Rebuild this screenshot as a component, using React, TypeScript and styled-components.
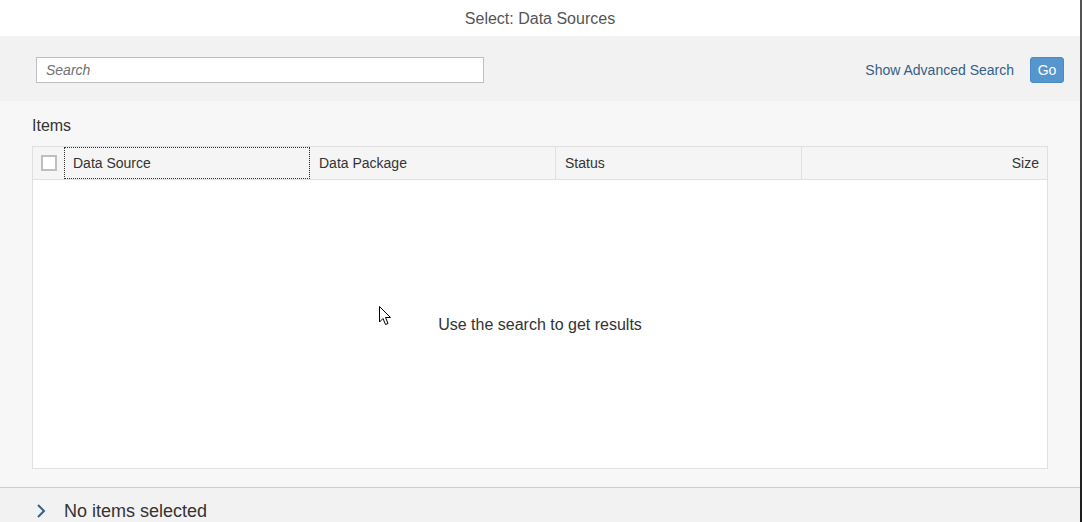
import styled, { createGlobalStyle } from "styled-components";

const GlobalStyle = createGlobalStyle`
  html, body {
    margin: 0;
    padding: 0;
    background: #4a4a4a;
    font-family: Arial, "Liberation Sans", sans-serif;
    color: #333333;
  }
  * { box-sizing: border-box; }
`;

const Backdrop = styled.div`
  width: 1082px;
  height: 522px;
  background: linear-gradient(#555555, #1c1c1c);
  overflow: hidden;
`;

const Dialog = styled.div`
  width: 1080px;
  height: 522px;
  background: #f7f7f7;
  display: flex;
  flex-direction: column;
  position: relative;
`;

const Header = styled.div`
  height: 36px;
  background: #ffffff;
  display: flex;
  align-items: center;
  justify-content: center;
  font-size: 16px;
  color: #555555;
  padding-top: 1px;
`;

const SearchBar = styled.div`
  height: 65px;
  background: #f2f2f2;
  display: flex;
  align-items: center;
  padding: 2px 16px 0 36px;
`;

const SearchInput = styled.input`
  width: 448px;
  height: 26px;
  border: 1px solid #bfbfbf;
  background: #ffffff;
  padding: 0 9px;
  font-size: 14px;
  font-family: inherit;
  outline: none;
  &::placeholder {
    font-style: italic;
    color: #707070;
  }
`;

const Spacer = styled.div`
  flex: 1;
`;

const Link = styled.a`
  color: #346187;
  font-size: 14px;
  margin-right: 16px;
  cursor: pointer;
`;

const GoButton = styled.button`
  width: 34px;
  height: 26px;
  border: 1px solid #4a89c4;
  border-radius: 3px;
  background: #5496cd;
  color: #ffffff;
  font-size: 14px;
  font-family: inherit;
  padding: 0;
`;

const Content = styled.div`
  flex: 1;
  padding: 14px 32px 18px 32px;
  display: flex;
  flex-direction: column;
`;

const SectionTitle = styled.div`
  font-size: 16px;
  color: #333333;
  height: 22px;
  line-height: 22px;
  margin-bottom: 9px;
`;

const Table = styled.div`
  width: 1016px;
  flex: 1;
  border: 1px solid #e0e0e0;
  display: flex;
  flex-direction: column;
  background: #ffffff;
`;

const HeadRow = styled.div`
  height: 33px;
  display: grid;
  grid-template-columns: 31px 246px 246px 246px 1fr;
  background: #f5f5f5;
  border-bottom: 1px solid #e0e0e0;
`;

const HeadCell = styled.div<{ $right?: boolean; $focus?: boolean; $last?: boolean }>`
  display: flex;
  align-items: center;
  justify-content: ${(p) => (p.$right ? "flex-end" : "flex-start")};
  padding: 0 8px 0 9px;
  font-size: 14px;
  color: #333333;
  border-right: ${(p) => (p.$last ? "none" : "1px solid #e0e0e0")};
  outline: ${(p) => (p.$focus ? "1px dotted #333333" : "none")};
  outline-offset: -1px;
`;

const CheckCell = styled.div`
  display: flex;
  align-items: center;
  justify-content: center;
  padding-left: 1px;
`;

const CheckBox = styled.div`
  width: 16px;
  height: 16px;
  border: 2px solid #bfbfbf;
  background: #ffffff;
`;

const Body = styled.div`
  flex: 1;
  display: flex;
  align-items: center;
  justify-content: center;
  font-size: 16px;
  color: #333333;
  padding-top: 2px;
`;

const Footer = styled.div`
  height: 35px;
  border-top: 1px solid #cccccc;
  background: #f2f2f2;
  display: flex;
  align-items: center;
  padding: 12px 0 0 34px;
  font-size: 18px;
  color: #333333;
`;

const Chevron = styled.svg`
  width: 14px;
  height: 16px;
  margin-right: 16px;
`;

const Cursor = styled.svg`
  position: absolute;
  left: 379px;
  top: 306px;
  width: 13px;
  height: 20px;
`;

function App() {
  return (
    <>
      <GlobalStyle />
      <Backdrop>
        <Dialog>
          <Header>Select: Data Sources</Header>
          <SearchBar>
            <SearchInput placeholder="Search" />
            <Spacer />
            <Link>Show Advanced Search</Link>
            <GoButton>Go</GoButton>
          </SearchBar>
          <Content>
            <SectionTitle>Items</SectionTitle>
            <Table>
              <HeadRow>
                <CheckCell>
                  <CheckBox />
                </CheckCell>
                <HeadCell $focus>Data Source</HeadCell>
                <HeadCell>Data Package</HeadCell>
                <HeadCell>Status</HeadCell>
                <HeadCell $right $last>Size</HeadCell>
              </HeadRow>
              <Body>Use the search to get results</Body>
            </Table>
          </Content>
          <Footer>
            <Chevron viewBox="0 0 14 16">
              <path d="M4 2 L10 8 L4 14" fill="none" stroke="#346187" strokeWidth="2" />
            </Chevron>
            No items selected
          </Footer>
          <Cursor viewBox="0 0 13 20">
            <path
              d="M0.5 0.5 L0.5 16 L4 12.5 L6.5 18.5 L9 17.5 L6.5 11.5 L11.5 11.5 Z"
              fill="#ffffff"
              stroke="#000000"
              strokeWidth="1"
            />
          </Cursor>
        </Dialog>
      </Backdrop>
    </>
  );
}

export default App;
